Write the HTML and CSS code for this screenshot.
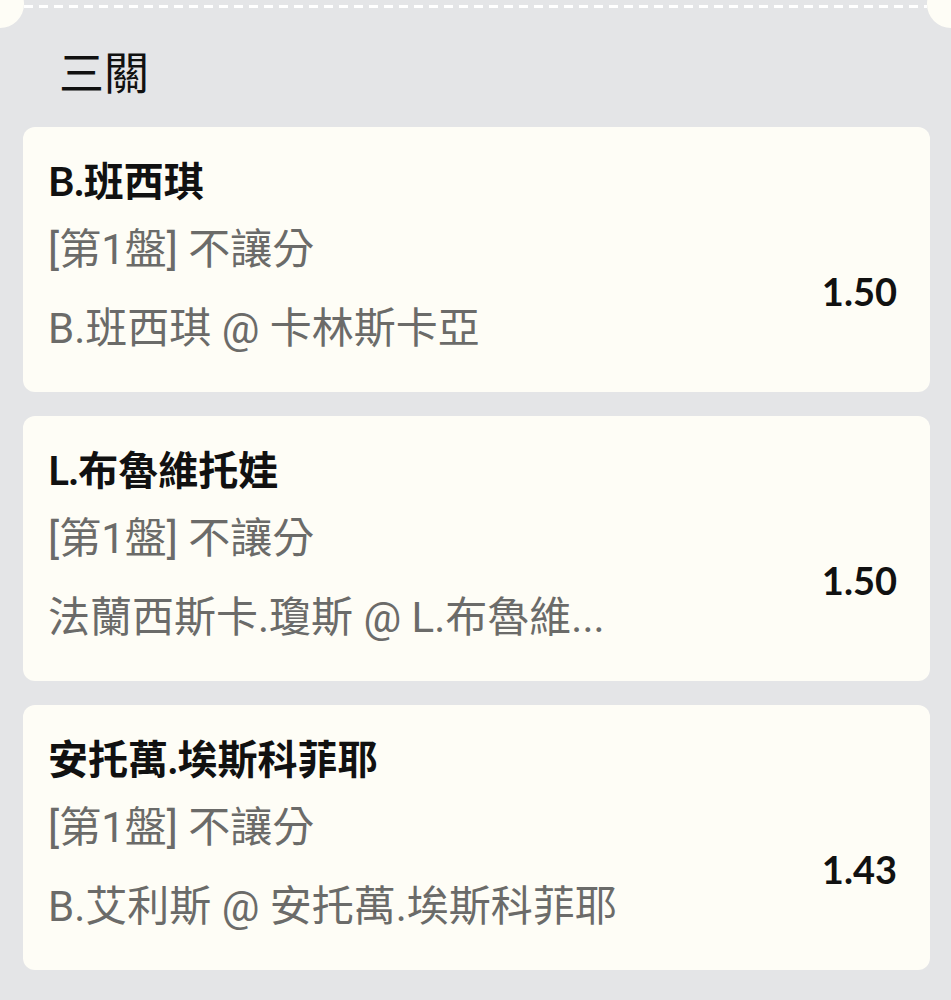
FILE: index.html
```html
<!DOCTYPE html>
<html lang="zh-Hant">
<head>
    <meta charset="UTF-8">
    <meta name="viewport" content="width=device-width, initial-scale=1.0">
    <title>三關</title>
    <link rel="stylesheet" href="styles.css">
</head>
<body>

<div class="slip">
    <!-- 票券撕線 -->
    <div class="tear">
        <span class="notch notch-left"></span>
        <span class="dashes"></span>
        <span class="notch notch-right"></span>
    </div>

    <h2 class="slip-title">三關</h2>

    <div class="bet-list">
        <div class="bet">
            <div class="bet-name">B.班西琪</div>
            <div class="bet-body">
                <div class="bet-info">
                    <div class="bet-market">[第1盤] 不讓分</div>
                    <div class="bet-match">B.班西琪 @ 卡林斯卡亞</div>
                </div>
                <div class="bet-odds">1.50</div>
            </div>
        </div>

        <div class="bet">
            <div class="bet-name">L.布魯維托娃</div>
            <div class="bet-body">
                <div class="bet-info">
                    <div class="bet-market">[第1盤] 不讓分</div>
                    <div class="bet-match">法蘭西斯卡.瓊斯 @ L.布魯維...</div>
                </div>
                <div class="bet-odds">1.50</div>
            </div>
        </div>

        <div class="bet">
            <div class="bet-name">安托萬.埃斯科菲耶</div>
            <div class="bet-body">
                <div class="bet-info">
                    <div class="bet-market">[第1盤] 不讓分</div>
                    <div class="bet-match">B.艾利斯 @ 安托萬.埃斯科菲耶</div>
                </div>
                <div class="bet-odds">1.43</div>
            </div>
        </div>
    </div>
</div>

</body>
</html>
```

FILE: styles.css
```css
body {
    font-family: Lato, "Noto Sans CJK TC", sans-serif;
    margin: 0;
    padding: 0;
    background-color: #e4e5e7;
    min-height: 100vh;
}
.slip {
    position: relative;
    padding: 0 21px 32px 23px;
}
.tear {
    position: relative;
    height: 28px;
    margin: 0 -21px 0 -23px;
}
.dashes {
    position: absolute;
    top: 5px;
    left: 24px;
    right: 24px;
    height: 3px;
    background: repeating-linear-gradient(to right, #ffffff 0, #ffffff 9px, transparent 9px, transparent 15px);
}
.notch {
    position: absolute;
    top: -20px;
    width: 48px;
    height: 48px;
    border-radius: 50%;
    background-color: #fefdf6;
}
.notch-left {
    left: -24px;
}
.notch-right {
    right: -24px;
}
.slip-title {
    margin: 13px 0 0 36px;
    font-size: 45px;
    font-weight: 400;
    line-height: 60px;
    color: #111;
    font-family: "Noto Sans CJK TC", sans-serif;
}
.bet-list {
    display: flex;
    flex-direction: column;
    gap: 24px;
    margin-top: 26px;
}
.bet {
    background-color: #fefdf6;
    border-radius: 12px;
    height: 265px;
    box-sizing: border-box;
    padding: 26px 33px 0 25px;
}
.bet-name {
    font-size: 40px;
    font-weight: 700;
    line-height: 56px;
    color: #111;
}
.bet-body {
    display: flex;
    align-items: center;
    justify-content: space-between;
    margin-top: 13px;
}
.bet-info {
    display: flex;
    flex-direction: column;
    gap: 23px;
}
.bet-market, .bet-match {
    font-family: Roboto, "Noto Sans CJK TC", sans-serif;
    font-size: 42px;
    line-height: 56px;
    color: #6b6b69;
}
.bet-odds {
    font-size: 38px;
    font-weight: 700;
    color: #111;
    margin-top: 2px;
}
```
